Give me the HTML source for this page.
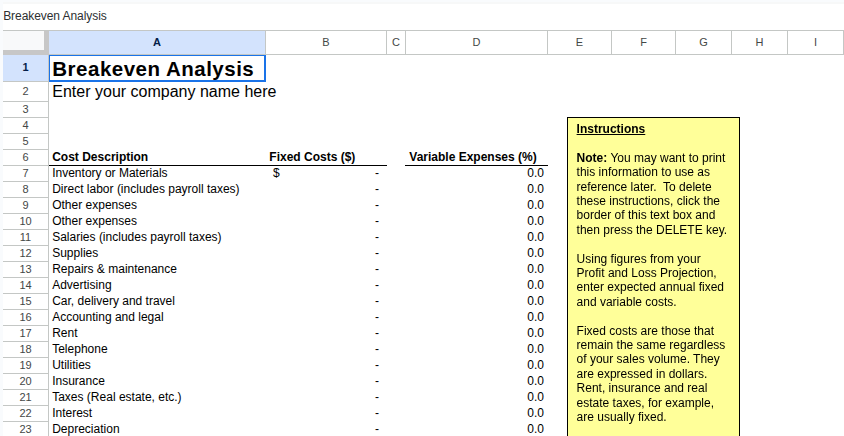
<!DOCTYPE html><html><head><meta charset="utf-8"><title>Breakeven Analysis</title><style>
html,body{margin:0;padding:0}
body{width:844px;height:436px;overflow:hidden;background:#f9fbfd;position:relative;font-family:"Liberation Sans",sans-serif;color:#000}
div{position:absolute;box-sizing:border-box;white-space:nowrap}
.sheet{left:3px;top:4px;width:841px;height:432px;background:#fff}
.topstrip{left:3px;top:2px;width:841px;height:2px;background:#f7f8f8}
.title{left:3.2px;top:9px;font-size:12px;line-height:14px;color:#2d2f31;letter-spacing:-0.07px}
.hline{height:1px;background:#c4c7c5}
.vline{width:1px;background:#c4c7c5}
.colh{top:31px;height:23px;font-size:11px;line-height:23px;text-align:center;color:#444746}
.rowh{left:3px;width:45px;font-size:11px;text-align:center;color:#444746}
.t{font-size:12px;line-height:14px;height:14px}
.b{font-weight:bold}
.r{text-align:right}
</style></head><body>
<div class="topstrip"></div><div class="sheet"></div>
<div class="title">Breakeven Analysis</div>
<div class="hline" style="left:3px;top:30px;width:841px"></div>
<div style="left:3px;top:31px;width:41px;height:19px;background:#f8f9fa"></div>
<div style="left:3px;top:50px;width:46px;height:5px;background:#c7c7c7"></div>
<div style="left:44px;top:31px;width:5px;height:24px;background:#c7c7c7"></div>
<div style="left:49px;top:31px;width:216px;height:24px;background:#d3e3fd"></div>
<div class="colh" style="left:49px;width:216px;font-weight:bold;color:#041e49;">A</div>
<div class="vline" style="left:265px;top:31px;height:24px"></div>
<div class="colh" style="left:266px;width:120px;">B</div>
<div class="vline" style="left:386px;top:31px;height:24px"></div>
<div class="colh" style="left:387px;width:18px;">C</div>
<div class="vline" style="left:405px;top:31px;height:24px"></div>
<div class="colh" style="left:406px;width:141px;">D</div>
<div class="vline" style="left:547px;top:31px;height:24px"></div>
<div class="colh" style="left:548px;width:63px;">E</div>
<div class="vline" style="left:611px;top:31px;height:24px"></div>
<div class="colh" style="left:612px;width:63px;">F</div>
<div class="vline" style="left:675px;top:31px;height:24px"></div>
<div class="colh" style="left:676px;width:55px;">G</div>
<div class="vline" style="left:731px;top:31px;height:24px"></div>
<div class="colh" style="left:732px;width:55px;">H</div>
<div class="vline" style="left:787px;top:31px;height:24px"></div>
<div class="colh" style="left:788px;width:55px;">I</div>
<div class="vline" style="left:843px;top:31px;height:24px"></div>
<div class="hline" style="left:49px;top:54px;width:795px"></div>
<div style="left:3px;top:55px;width:45px;height:26px;background:#d3e3fd"></div>
<div class="rowh" style="top:55px;height:26px;line-height:24px;font-weight:bold;color:#041e49;">1</div>
<div class="hline" style="left:3px;top:81px;width:45px"></div>
<div class="rowh" style="top:82px;height:19px;line-height:19px;">2</div>
<div class="hline" style="left:3px;top:101px;width:45px"></div>
<div class="rowh" style="top:102px;height:15px;line-height:14px;">3</div>
<div class="hline" style="left:3px;top:117px;width:45px"></div>
<div class="rowh" style="top:118px;height:15px;line-height:14px;">4</div>
<div class="hline" style="left:3px;top:133px;width:45px"></div>
<div class="rowh" style="top:134px;height:15px;line-height:14px;">5</div>
<div class="hline" style="left:3px;top:149px;width:45px"></div>
<div class="rowh" style="top:150px;height:15px;line-height:14px;">6</div>
<div class="hline" style="left:3px;top:165px;width:45px"></div>
<div class="rowh" style="top:166px;height:15px;line-height:14px;">7</div>
<div class="hline" style="left:3px;top:181px;width:45px"></div>
<div class="rowh" style="top:182px;height:15px;line-height:14px;">8</div>
<div class="hline" style="left:3px;top:197px;width:45px"></div>
<div class="rowh" style="top:198px;height:15px;line-height:14px;">9</div>
<div class="hline" style="left:3px;top:213px;width:45px"></div>
<div class="rowh" style="top:214px;height:15px;line-height:14px;">10</div>
<div class="hline" style="left:3px;top:229px;width:45px"></div>
<div class="rowh" style="top:230px;height:15px;line-height:14px;">11</div>
<div class="hline" style="left:3px;top:245px;width:45px"></div>
<div class="rowh" style="top:246px;height:15px;line-height:14px;">12</div>
<div class="hline" style="left:3px;top:261px;width:45px"></div>
<div class="rowh" style="top:262px;height:15px;line-height:14px;">13</div>
<div class="hline" style="left:3px;top:277px;width:45px"></div>
<div class="rowh" style="top:278px;height:15px;line-height:14px;">14</div>
<div class="hline" style="left:3px;top:293px;width:45px"></div>
<div class="rowh" style="top:294px;height:15px;line-height:14px;">15</div>
<div class="hline" style="left:3px;top:309px;width:45px"></div>
<div class="rowh" style="top:310px;height:15px;line-height:14px;">16</div>
<div class="hline" style="left:3px;top:325px;width:45px"></div>
<div class="rowh" style="top:326px;height:15px;line-height:14px;">17</div>
<div class="hline" style="left:3px;top:341px;width:45px"></div>
<div class="rowh" style="top:342px;height:15px;line-height:14px;">18</div>
<div class="hline" style="left:3px;top:357px;width:45px"></div>
<div class="rowh" style="top:358px;height:15px;line-height:14px;">19</div>
<div class="hline" style="left:3px;top:373px;width:45px"></div>
<div class="rowh" style="top:374px;height:15px;line-height:14px;">20</div>
<div class="hline" style="left:3px;top:389px;width:45px"></div>
<div class="rowh" style="top:390px;height:15px;line-height:14px;">21</div>
<div class="hline" style="left:3px;top:405px;width:45px"></div>
<div class="rowh" style="top:406px;height:15px;line-height:14px;">22</div>
<div class="hline" style="left:3px;top:421px;width:45px"></div>
<div class="rowh" style="top:422px;height:15px;line-height:14px;">23</div>
<div class="hline" style="left:3px;top:437px;width:45px"></div>
<div class="vline" style="left:48px;top:55px;height:381px"></div>
<div style="left:49px;top:55px;width:217px;height:27px;border:solid #1a73e8;border-width:1px 2px 2px 1px;background:#fff"></div>
<div style="left:52.3px;top:57px;font-size:20.5px;letter-spacing:0.5px;line-height:24px;font-weight:bold">Breakeven Analysis</div>
<div style="left:52.3px;top:83px;font-size:16px;line-height:18px">Enter your company name here</div>
<div class="t b" style="left:52.2px;top:150px;">Cost Description</div>
<div class="t b" style="left:269.3px;top:150px;">Fixed Costs ($)</div>
<div class="t b" style="left:409.3px;top:150px;">Variable Expenses (%)</div>
<div style="left:49px;top:165px;width:338px;height:1px;background:#000"></div>
<div style="left:405px;top:165px;width:143px;height:1px;background:#000"></div>
<div class="t" style="left:52.2px;top:166px;">Inventory or Materials</div>
<div class="t" style="left:273px;top:166px;">$</div>
<div class="t" style="left:375px;top:166px;">-</div>
<div class="t r" style="left:500px;width:44px;top:166px">0.0</div>
<div class="t" style="left:52.2px;top:182px;">Direct labor (includes payroll taxes)</div>
<div class="t" style="left:375px;top:182px;">-</div>
<div class="t r" style="left:500px;width:44px;top:182px">0.0</div>
<div class="t" style="left:52.2px;top:198px;">Other expenses</div>
<div class="t" style="left:375px;top:198px;">-</div>
<div class="t r" style="left:500px;width:44px;top:198px">0.0</div>
<div class="t" style="left:52.2px;top:214px;">Other expenses</div>
<div class="t" style="left:375px;top:214px;">-</div>
<div class="t r" style="left:500px;width:44px;top:214px">0.0</div>
<div class="t" style="left:52.2px;top:230px;">Salaries (includes payroll taxes)</div>
<div class="t" style="left:375px;top:230px;">-</div>
<div class="t r" style="left:500px;width:44px;top:230px">0.0</div>
<div class="t" style="left:52.2px;top:246px;">Supplies</div>
<div class="t" style="left:375px;top:246px;">-</div>
<div class="t r" style="left:500px;width:44px;top:246px">0.0</div>
<div class="t" style="left:52.2px;top:262px;">Repairs &amp; maintenance</div>
<div class="t" style="left:375px;top:262px;">-</div>
<div class="t r" style="left:500px;width:44px;top:262px">0.0</div>
<div class="t" style="left:52.2px;top:278px;">Advertising</div>
<div class="t" style="left:375px;top:278px;">-</div>
<div class="t r" style="left:500px;width:44px;top:278px">0.0</div>
<div class="t" style="left:52.2px;top:294px;">Car, delivery and travel</div>
<div class="t" style="left:375px;top:294px;">-</div>
<div class="t r" style="left:500px;width:44px;top:294px">0.0</div>
<div class="t" style="left:52.2px;top:310px;">Accounting and legal</div>
<div class="t" style="left:375px;top:310px;">-</div>
<div class="t r" style="left:500px;width:44px;top:310px">0.0</div>
<div class="t" style="left:52.2px;top:326px;">Rent</div>
<div class="t" style="left:375px;top:326px;">-</div>
<div class="t r" style="left:500px;width:44px;top:326px">0.0</div>
<div class="t" style="left:52.2px;top:342px;">Telephone</div>
<div class="t" style="left:375px;top:342px;">-</div>
<div class="t r" style="left:500px;width:44px;top:342px">0.0</div>
<div class="t" style="left:52.2px;top:358px;">Utilities</div>
<div class="t" style="left:375px;top:358px;">-</div>
<div class="t r" style="left:500px;width:44px;top:358px">0.0</div>
<div class="t" style="left:52.2px;top:374px;">Insurance</div>
<div class="t" style="left:375px;top:374px;">-</div>
<div class="t r" style="left:500px;width:44px;top:374px">0.0</div>
<div class="t" style="left:52.2px;top:390px;">Taxes (Real estate, etc.)</div>
<div class="t" style="left:375px;top:390px;">-</div>
<div class="t r" style="left:500px;width:44px;top:390px">0.0</div>
<div class="t" style="left:52.2px;top:406px;">Interest</div>
<div class="t" style="left:375px;top:406px;">-</div>
<div class="t r" style="left:500px;width:44px;top:406px">0.0</div>
<div class="t" style="left:52.2px;top:422px;">Depreciation</div>
<div class="t" style="left:375px;top:422px;">-</div>
<div class="t r" style="left:500px;width:44px;top:422px">0.0</div>
<div style="left:567px;top:117px;width:173px;height:330px;background:#ffff99;border:1px solid #000"></div>
<div style="left:0;top:0;width:844px;height:436px;filter:blur(0.35px)">
<div class="t" style="left:576.6px;top:122px"><b style='text-decoration:underline'>Instructions</b></div>
<div class="t" style="left:576.6px;top:151px"><b>Note:</b> You may want to print</div>
<div class="t" style="left:576.6px;top:165px">this information to use as</div>
<div class="t" style="left:576.6px;top:180px">reference later.&nbsp; To delete</div>
<div class="t" style="left:576.6px;top:194px">these instructions, click the</div>
<div class="t" style="left:576.6px;top:208px">border of this text box and</div>
<div class="t" style="left:576.6px;top:223px">then press the DELETE key.</div>
<div class="t" style="left:576.6px;top:252px">Using figures from your</div>
<div class="t" style="left:576.6px;top:266px">Profit and Loss Projection,</div>
<div class="t" style="left:576.6px;top:280px">enter expected annual fixed</div>
<div class="t" style="left:576.6px;top:295px">and variable costs.</div>
<div class="t" style="left:576.6px;top:324px">Fixed costs are those that</div>
<div class="t" style="left:576.6px;top:338px">remain the same regardless</div>
<div class="t" style="left:576.6px;top:352px">of your sales volume. They</div>
<div class="t" style="left:576.6px;top:367px">are expressed in dollars.</div>
<div class="t" style="left:576.6px;top:381px">Rent, insurance and real</div>
<div class="t" style="left:576.6px;top:396px">estate taxes, for example,</div>
<div class="t" style="left:576.6px;top:410px">are usually fixed.</div>
</div>
</body></html>
